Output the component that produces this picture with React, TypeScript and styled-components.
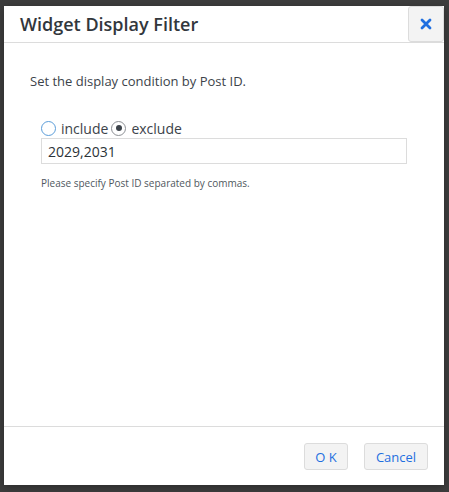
import React from "react";
import styled, { createGlobalStyle } from "styled-components";

const GlobalStyle = createGlobalStyle`
  html, body {
    margin: 0;
    padding: 0;
    background: #3d3d3d;
  }
  body {
    font-family: "Open Sans", "Liberation Sans", sans-serif;
  }
`;

const Backdrop = styled.div`
  width: 449px;
  height: 492px;
  background: #3d3d3d;
  padding: 6px 5px 7px 4px;
  box-sizing: border-box;
  display: flex;
`;

const Dialog = styled.div`
  flex: 1;
  background: #fff;
  display: flex;
  flex-direction: column;
  box-shadow: 0 2px 8px rgba(0, 0, 0, 0.3);
`;

const Header = styled.div`
  height: 36px;
  display: flex;
  align-items: center;
  border-bottom: 1px solid #dcdcdc;
`;

const Title = styled.h1`
  flex: 1;
  margin: 0 0 0 16px;
  font-size: 18px;
  font-weight: 600;
  color: #32373c;
  line-height: 36px;
`;

const CloseButton = styled.button`
  width: 36px;
  height: 36px;
  margin: 0;
  padding: 0;
  border: 1px solid #dcdcdc;
  border-radius: 3px;
  background: #f3f3f3;
  display: flex;
  align-items: center;
  justify-content: center;
  cursor: pointer;
`;

const Body = styled.div`
  flex: 1;
  padding: 29px 26px 0 26px;
`;

const Lead = styled.p`
  margin: 0;
  font-size: 13px;
  line-height: 18px;
  color: #3c434a;
`;

const Field = styled.div`
  margin: 28px 0 0 11px;
  width: 366px;
`;

const RadioRow = styled.div`
  display: flex;
  align-items: center;
  height: 20px;
  font-size: 14px;
  color: #3c434a;
`;

const RadioLabel = styled.label`
  display: flex;
  align-items: center;
  gap: 5px;
  margin-right: 3px;
`;

const RadioMark = styled.span<{ $checked?: boolean; $focused?: boolean }>`
  width: 15px;
  height: 15px;
  box-sizing: border-box;
  border-radius: 50%;
  border: ${(p) => (p.$focused ? "1.5px solid #5b9dd9" : "1px solid #8c8f94")};
  background: #fff;
  display: flex;
  align-items: center;
  justify-content: center;
  &::after {
    content: "";
    display: ${(p) => (p.$checked ? "block" : "none")};
    width: 6px;
    height: 6px;
    border-radius: 50%;
    background: #3c434a;
  }
`;

const TextInput = styled.div`
  margin-top: 0;
  height: 26px;
  box-sizing: border-box;
  border: 1px solid #dcdcdc;
  padding: 0 6px;
  display: flex;
  align-items: center;
  font-size: 14px;
  color: #2c3338;
`;

const Help = styled.p`
  margin: 12px 0 0;
  font-size: 10px;
  line-height: 14px;
  color: #50575e;
`;

const Footer = styled.div`
  border-top: 1px solid #dcdcdc;
  height: 59px;
  box-sizing: border-box;
  padding: 16px 16px 0 0;
  display: flex;
  justify-content: flex-end;
  gap: 16px;
`;

const Button = styled.button<{ $wide?: boolean }>`
  height: 27px;
  min-width: ${(p) => (p.$wide ? "64px" : "44px")};
  padding: 0 10px;
  border: 1px solid #dcdcdc;
  border-radius: 3px;
  background: #f3f3f3;
  color: #1f6fe0;
  font-family: "Open Sans", "Liberation Sans", sans-serif;
  font-size: 13px;
  cursor: pointer;
`;

const CloseIcon = () => (
  <svg width="12" height="12" viewBox="0 0 12 12">
    <path
      d="M2 2 L10 10 M10 2 L2 10"
      stroke="#1f6fe0"
      strokeWidth="2.8"
      strokeLinecap="round"
    />
  </svg>
);

export default function App() {
  return (
    <>
      <GlobalStyle />
      <Backdrop>
        <Dialog>
          <Header>
            <Title>Widget Display Filter</Title>
            <CloseButton aria-label="Close">
              <CloseIcon />
            </CloseButton>
          </Header>
          <Body>
            <Lead>Set the display condition by Post ID.</Lead>
            <Field>
              <RadioRow>
                <RadioLabel>
                  <RadioMark $focused />
                  include
                </RadioLabel>
                <RadioLabel>
                  <RadioMark $checked />
                  exclude
                </RadioLabel>
              </RadioRow>
              <TextInput>2029,2031</TextInput>
              <Help>Please specify Post ID separated by commas.</Help>
            </Field>
          </Body>
          <Footer>
            <Button>O K</Button>
            <Button $wide>Cancel</Button>
          </Footer>
        </Dialog>
      </Backdrop>
    </>
  );
}
